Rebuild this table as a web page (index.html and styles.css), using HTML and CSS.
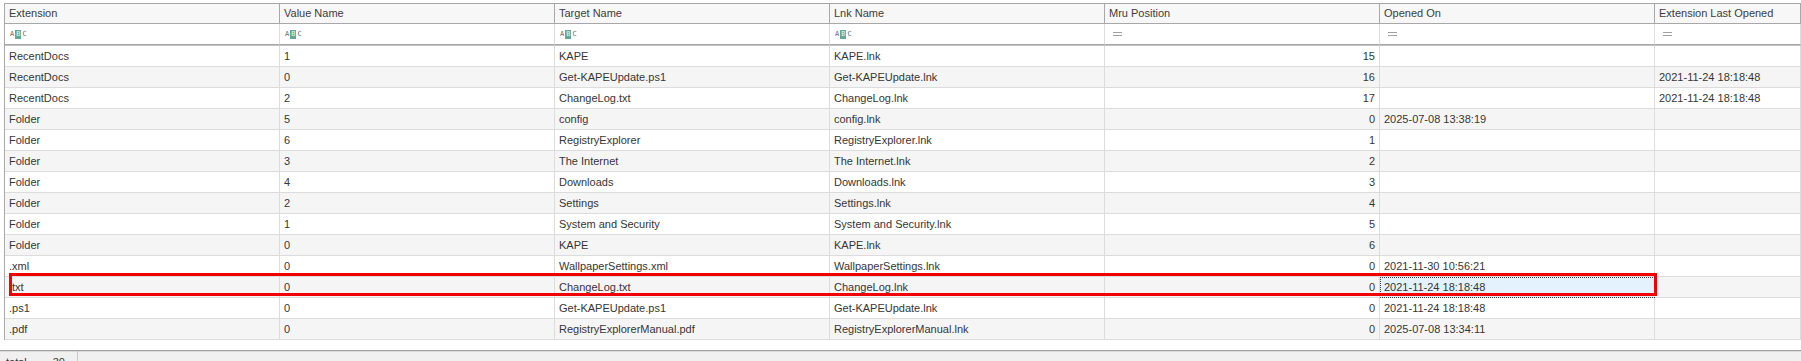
FILE: index.html
```html
<!DOCTYPE html>
<html>
<head>
<meta charset="utf-8">
<link rel="stylesheet" href="styles.css">
</head>
<body>
<div class="page">
  <div class="grid">
    <div class="row hdr">
      <div class="cell">Extension</div>
      <div class="cell">Value Name</div>
      <div class="cell">Target Name</div>
      <div class="cell">Lnk Name</div>
      <div class="cell">Mru Position</div>
      <div class="cell">Opened On</div>
      <div class="cell">Extension Last Opened</div>
    </div>
    <div class="row filter">
      <div class="cell"><span class="abc"><span>A</span><span class="b">B</span><span>C</span></span></div>
      <div class="cell"><span class="abc"><span>A</span><span class="b">B</span><span>C</span></span></div>
      <div class="cell"><span class="abc"><span>A</span><span class="b">B</span><span>C</span></span></div>
      <div class="cell"><span class="abc"><span>A</span><span class="b">B</span><span>C</span></span></div>
      <div class="cell"><span class="eq"></span></div>
      <div class="cell"><span class="eq"></span></div>
      <div class="cell"><span class="eq"></span></div>
    </div>
    <div class="row"><div class="cell">RecentDocs</div><div class="cell">1</div><div class="cell">KAPE</div><div class="cell">KAPE.lnk</div><div class="cell num">15</div><div class="cell"></div><div class="cell"></div></div>
    <div class="row alt"><div class="cell">RecentDocs</div><div class="cell">0</div><div class="cell">Get-KAPEUpdate.ps1</div><div class="cell">Get-KAPEUpdate.lnk</div><div class="cell num">16</div><div class="cell"></div><div class="cell">2021-11-24 18:18:48</div></div>
    <div class="row"><div class="cell">RecentDocs</div><div class="cell">2</div><div class="cell">ChangeLog.txt</div><div class="cell">ChangeLog.lnk</div><div class="cell num">17</div><div class="cell"></div><div class="cell">2021-11-24 18:18:48</div></div>
    <div class="row alt"><div class="cell">Folder</div><div class="cell">5</div><div class="cell">config</div><div class="cell">config.lnk</div><div class="cell num">0</div><div class="cell">2025-07-08 13:38:19</div><div class="cell"></div></div>
    <div class="row"><div class="cell">Folder</div><div class="cell">6</div><div class="cell">RegistryExplorer</div><div class="cell">RegistryExplorer.lnk</div><div class="cell num">1</div><div class="cell"></div><div class="cell"></div></div>
    <div class="row alt"><div class="cell">Folder</div><div class="cell">3</div><div class="cell">The Internet</div><div class="cell">The Internet.lnk</div><div class="cell num">2</div><div class="cell"></div><div class="cell"></div></div>
    <div class="row"><div class="cell">Folder</div><div class="cell">4</div><div class="cell">Downloads</div><div class="cell">Downloads.lnk</div><div class="cell num">3</div><div class="cell"></div><div class="cell"></div></div>
    <div class="row alt"><div class="cell">Folder</div><div class="cell">2</div><div class="cell">Settings</div><div class="cell">Settings.lnk</div><div class="cell num">4</div><div class="cell"></div><div class="cell"></div></div>
    <div class="row"><div class="cell">Folder</div><div class="cell">1</div><div class="cell">System and Security</div><div class="cell">System and Security.lnk</div><div class="cell num">5</div><div class="cell"></div><div class="cell"></div></div>
    <div class="row alt"><div class="cell">Folder</div><div class="cell">0</div><div class="cell">KAPE</div><div class="cell">KAPE.lnk</div><div class="cell num">6</div><div class="cell"></div><div class="cell"></div></div>
    <div class="row"><div class="cell">.xml</div><div class="cell">0</div><div class="cell">WallpaperSettings.xml</div><div class="cell">WallpaperSettings.lnk</div><div class="cell num">0</div><div class="cell">2021-11-30 10:56:21</div><div class="cell"></div></div>
    <div class="row alt"><div class="cell">.txt</div><div class="cell">0</div><div class="cell">ChangeLog.txt</div><div class="cell">ChangeLog.lnk</div><div class="cell num">0</div><div class="cell sel">2021-11-24 18:18:48</div><div class="cell"></div></div>
    <div class="row"><div class="cell">.ps1</div><div class="cell">0</div><div class="cell">Get-KAPEUpdate.ps1</div><div class="cell">Get-KAPEUpdate.lnk</div><div class="cell num">0</div><div class="cell">2021-11-24 18:18:48</div><div class="cell"></div></div>
    <div class="row alt"><div class="cell">.pdf</div><div class="cell">0</div><div class="cell">RegistryExplorerManual.pdf</div><div class="cell">RegistryExplorerManual.lnk</div><div class="cell num">0</div><div class="cell">2025-07-08 13:34:11</div><div class="cell"></div></div>
  </div>
  <div class="highlight"></div>
  <div class="status">
    <div class="panel"><span>total rows</span><span>30</span></div>
    <div class="panel rest"></div>
  </div>
</div>
</body>
</html>
```

FILE: styles.css
```css
html, body {
  margin: 0;
  padding: 0;
  background: #ffffff;
}
body {
  width: 1801px;
  height: 361px;
  overflow: hidden;
  font-family: "Liberation Sans", Arial, sans-serif;
  font-size: 11px;
  color: #363636;
}
.page {
  position: relative;
  width: 1801px;
  height: 361px;
  overflow: hidden;
}
.grid {
  margin: 3px 0 0 4px;
  border-top: 1px solid #a8a8a8;
  border-left: 1px solid #a8a8a8;
}
.row {
  display: grid;
  grid-template-columns: repeat(6, 275px) 1fr;
}
.cell {
  box-sizing: border-box;
  height: 21px;
  line-height: 20px;
  padding: 0 4px;
  border-right: 1px solid #dcdcdc;
  border-bottom: 1px solid #dcdcdc;
  white-space: nowrap;
  overflow: hidden;
  background: #ffffff;
}
.row.alt .cell {
  background: #f5f5f5;
}
.num {
  text-align: right;
}
.hdr .cell {
  height: 20px;
  line-height: 19px;
  background: #f7f7f7;
  border-right: 1px solid #a8a8a8;
  border-bottom: 1px solid #a8a8a8;
  color: #3c3c3c;
}
.filter {
  border-bottom: 1px solid #c4c4c4;
}
.filter .cell {
  height: 21px;
  display: flex;
  align-items: center;
  border-bottom: 1px solid #a8a8a8;
}
.abc {
  display: inline-flex;
  align-items: center;
  gap: 1px;
  font-family: "DejaVu Sans Mono", monospace;
  font-size: 7px;
  line-height: 8px;
  color: #6a6a6a;
  margin-left: 1px;
}
.abc .b {
  background: #62a894;
  color: #e8f4f0;
  padding: 0 1px;
  height: 9px;
  line-height: 9px;
}
.eq {
  display: block;
  width: 9px;
  height: 2px;
  margin-left: 4px;
  border-top: 1px solid #a0a0a0;
  border-bottom: 1px solid #a0a0a0;
}
.sel {
  background: #e3f2fc !important;
  outline: 1px dotted #404040;
  outline-offset: -1px;
}
.highlight {
  position: absolute;
  left: 9px;
  top: 273px;
  width: 1648px;
  height: 23px;
  box-sizing: border-box;
  border: 3px solid #f00000;
}
.status {
  margin-top: 10px;
  border-top: 1px solid #a0a0a0;
  box-shadow: inset 0 1px 0 #dadada;
  background: #f0f0f0;
  height: 10px;
  overflow: hidden;
  display: flex;
}
.panel {
  box-sizing: border-box;
  width: 78px;
  height: 10px;
  padding: 3px 12px 0 6px;
  display: flex;
  justify-content: space-between;
  border-right: 1px solid #c8c8c8;
  line-height: 16px;
}
.panel.rest {
  flex: 1;
  border-right: 0;
}
```
